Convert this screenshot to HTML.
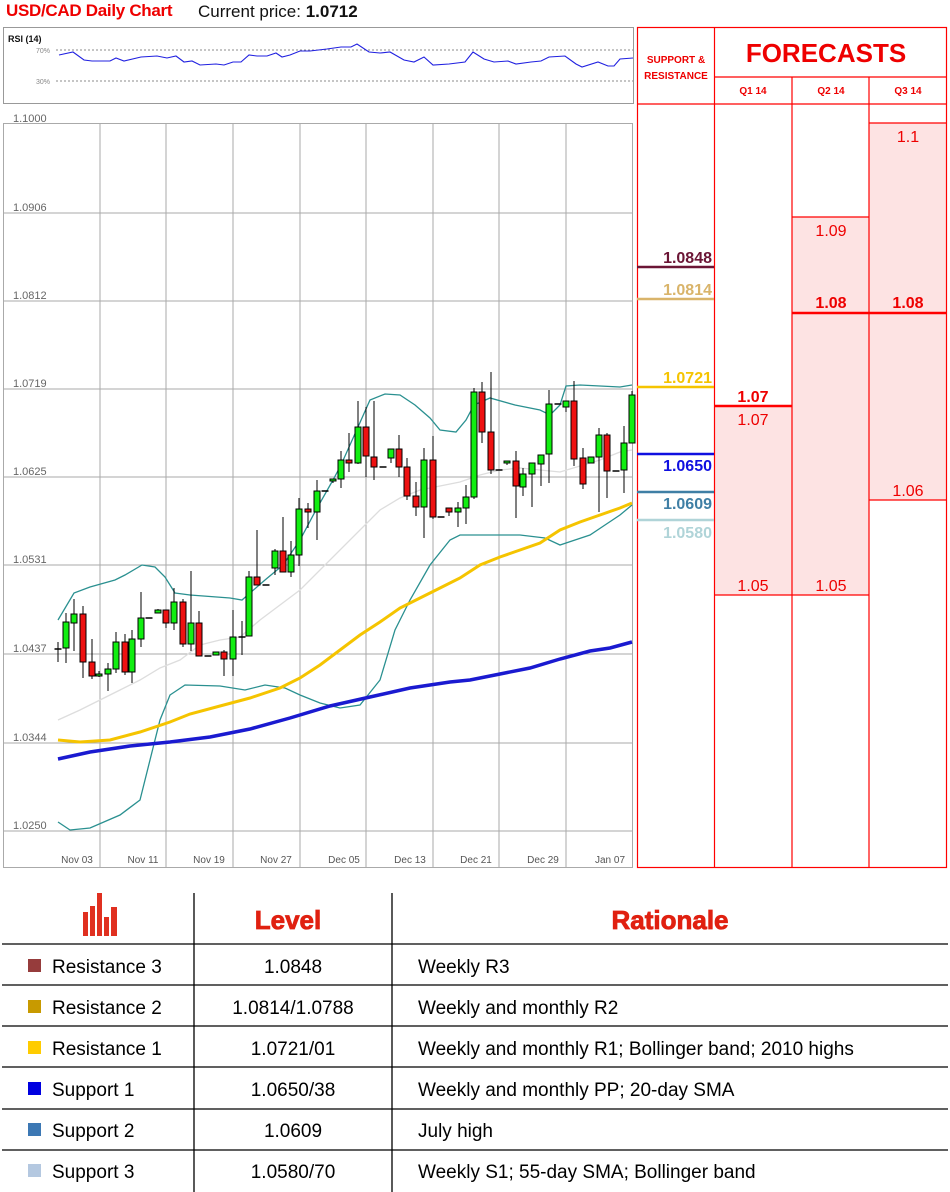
<!DOCTYPE html>
<html><head><meta charset="utf-8"><style>
body{margin:0;width:950px;height:1192px;background:#fff;overflow:hidden;position:relative;font-family:"Liberation Sans",sans-serif}
.a{position:absolute}
.t td{border-bottom:1px solid #000;height:40px;font-size:19px;color:#000}
</style></head><body>
<div class="a" style="left:6px;top:1px;font-size:17px;font-weight:bold;color:#e00;letter-spacing:-0.3px">USD/CAD Daily Chart</div>
<div class="a" style="left:198px;top:2px;font-size:17px;color:#111">Current price: <b>1.0712</b></div>

<svg class="a" style="left:0;top:0" width="950" height="880">
<!-- RSI panel -->
<rect x="3.5" y="27.5" width="630" height="76" fill="#fff" stroke="#999"/>
<text x="8" y="42" font-size="9" font-weight="bold" fill="#111">RSI (14)</text>
<text x="36" y="53" font-size="7" fill="#888">70%</text>
<text x="36" y="84" font-size="7" fill="#888">30%</text>
<line x1="56" y1="50" x2="633" y2="50" stroke="#666" stroke-dasharray="2,2" stroke-width="0.8"/>
<line x1="56" y1="81" x2="633" y2="81" stroke="#666" stroke-dasharray="2,2" stroke-width="0.8"/>
<polyline fill="none" stroke="#2020e0" stroke-width="1.1" points="59,55 73,52 84,60 92,61 110,61 116,58 124,61 141,57 157,56 167,58 176,56 184,62 192,61 200,65 216,64 224,65 233,62 241,62 249,55 257,56 267,56 276,53 282,57 290,55 300,51 310,51 327,49 341,47 351,47 357,44 369,52 380,53 390,52 404,60 414,62 424,57 433,65 449,64 465,62 473,52 484,59 494,62 508,61 516,64 531,62 541,61 549,57 565,56 576,64 582,67 598,62 608,66 614,66 620,59 633,58"/>
<!-- main chart -->
<rect x="3.5" y="123.5" width="629" height="744" fill="#fff" stroke="#aaa"/>
<g stroke="#aaa" stroke-width="1">
<line x1="4" y1="213" x2="633" y2="213"/><line x1="4" y1="301" x2="633" y2="301"/><line x1="4" y1="389" x2="633" y2="389"/><line x1="4" y1="477" x2="633" y2="477"/><line x1="4" y1="565" x2="633" y2="565"/><line x1="4" y1="654" x2="633" y2="654"/><line x1="4" y1="743" x2="633" y2="743"/><line x1="4" y1="831" x2="633" y2="831"/>
<line x1="100" y1="124" x2="100" y2="868"/><line x1="166" y1="124" x2="166" y2="868"/><line x1="233" y1="124" x2="233" y2="868"/><line x1="300" y1="124" x2="300" y2="868"/><line x1="366" y1="124" x2="366" y2="868"/><line x1="433" y1="124" x2="433" y2="868"/><line x1="499" y1="124" x2="499" y2="868"/><line x1="566" y1="124" x2="566" y2="868"/>
</g>
<g font-size="11" fill="#666">
<text x="13" y="122">1.1000</text><text x="13" y="211">1.0906</text><text x="13" y="299">1.0812</text><text x="13" y="387">1.0719</text><text x="13" y="475">1.0625</text><text x="13" y="563">1.0531</text><text x="13" y="652">1.0437</text><text x="13" y="741">1.0344</text><text x="13" y="829">1.0250</text>
</g>
<g font-size="10" fill="#555" text-anchor="middle">
<text x="77" y="863">Nov 03</text><text x="143" y="863">Nov 11</text><text x="209" y="863">Nov 19</text><text x="276" y="863">Nov 27</text><text x="344" y="863">Dec 05</text><text x="410" y="863">Dec 13</text><text x="476" y="863">Dec 21</text><text x="543" y="863">Dec 29</text><text x="610" y="863">Jan 07</text>
</g>
<polyline fill="none" stroke="#ddd" stroke-width="1.3" points="58,720 80,710 100,700 120,690 140,680 160,668 180,660 200,645 220,640 240,637 260,620 280,605 300,590 320,570 340,550 360,530 380,510 400,498 420,490 440,486 460,482 480,475 500,470 520,468 540,470 560,472 580,466 600,460 620,452 632,450"/>
<polyline fill="none" stroke="#2a9090" stroke-width="1.3" points="58,620 74,593 90,587 115,580 125,575 142,565 155,567 165,577 175,593 190,595 230,598 242,600 265,580 283,565 300,540 316,510 333,480 341,465 358,427 370,400 385,394 400,395 415,405 430,418 440,430 456,432 466,420 474,405 490,398 515,405 540,410 550,415 560,405 566,386 580,385 600,386 620,387 632,385"/>
<polyline fill="none" stroke="#2a9090" stroke-width="1.3" points="58,822 70,830 90,828 120,815 140,800 150,760 160,720 170,695 185,685 220,686 245,690 265,685 285,688 300,695 320,703 340,708 360,705 380,680 395,630 410,600 430,565 450,540 460,535 500,535 520,535 545,538 560,545 575,540 590,535 605,525 620,515 632,505"/>
<polyline fill="none" stroke="#f5c400" stroke-width="3" points="58,740 80,742 110,740 140,732 170,722 190,714 220,706 250,698 280,688 300,678 320,665 340,650 360,635 380,622 400,608 420,598 440,588 460,578 480,565 500,557 520,550 540,543 560,530 580,522 600,515 620,508 632,503"/>
<polyline fill="none" stroke="#1a1ad0" stroke-width="3.5" points="58,759 90,752 130,746 170,742 210,737 250,729 290,718 330,706 370,697 410,688 450,682 470,680 500,674 530,668 560,659 590,651 610,648 632,642"/>
<g id="c" stroke="#000" stroke-width="1"></g>
<!-- right panel -->
<rect x="714" y="406" width="78" height="189" fill="#fde3e3"/>
<rect x="792" y="217" width="77" height="378" fill="#fde3e3"/>
<rect x="869" y="123" width="78" height="377" fill="#fde3e3"/>
<g stroke="#f00" stroke-width="1.2" fill="none">
<rect x="637.5" y="27.5" width="309" height="840"/>
<line x1="714.5" y1="28" x2="714.5" y2="868"/>
<line x1="792" y1="77" x2="792" y2="868"/>
<line x1="869" y1="77" x2="869" y2="868"/>
<line x1="714" y1="77" x2="947" y2="77"/>
<line x1="637" y1="104" x2="947" y2="104"/>
<line x1="869" y1="123" x2="947" y2="123"/>
<line x1="792" y1="217" x2="869" y2="217"/>
<line x1="714" y1="595" x2="869" y2="595"/>
<line x1="869" y1="500" x2="947" y2="500"/>
<line x1="792" y1="313" x2="947" y2="313" stroke-width="2.5"/>
<line x1="714" y1="406" x2="792" y2="406" stroke-width="2.5"/>
</g>
<g font-weight="bold" fill="#e00" text-anchor="middle">
<text x="676" y="63" font-size="10">SUPPORT &amp;</text>
<text x="676" y="79" font-size="10">RESISTANCE</text>
<text x="826" y="62" font-size="26">FORECASTS</text>
<text x="753" y="94" font-size="10">Q1 14</text><text x="831" y="94" font-size="10">Q2 14</text><text x="908" y="94" font-size="10">Q3 14</text>
<text x="831" y="308" font-size="16">1.08</text><text x="908" y="308" font-size="16">1.08</text>
<text x="753" y="402" font-size="16">1.07</text>
</g>
<g fill="#e00" text-anchor="middle" font-size="16">
<text x="908" y="142">1.1</text><text x="831" y="236">1.09</text><text x="753" y="425">1.07</text><text x="908" y="496">1.06</text><text x="753" y="591">1.05</text><text x="831" y="591">1.05</text>
</g>
<line x1="637" y1="267" x2="714" y2="267" stroke="#6b1535" stroke-width="2.5"/>
<line x1="637" y1="299" x2="714" y2="299" stroke="#d9b46a" stroke-width="2.5"/>
<line x1="637" y1="387" x2="714" y2="387" stroke="#f5c400" stroke-width="2.5"/>
<line x1="637" y1="454" x2="714" y2="454" stroke="#1010e0" stroke-width="2.5"/>
<line x1="637" y1="492" x2="714" y2="492" stroke="#3f7fa5" stroke-width="2.5"/>
<line x1="637" y1="520" x2="714" y2="520" stroke="#b0d4d8" stroke-width="2.5"/>
<g font-size="16" font-weight="bold" text-anchor="end">
<text x="712" y="263" fill="#6b1535">1.0848</text>
<text x="712" y="295" fill="#d9b46a">1.0814</text>
<text x="712" y="383" fill="#f5c400">1.0721</text>
<text x="712" y="471" fill="#1010e0">1.0650</text>
<text x="712" y="509" fill="#3f7fa5">1.0609</text>
<text x="712" y="538" fill="#b0d4d8">1.0580</text>
</g>
</svg>

<!-- bottom table -->
<svg class="a" style="left:0;top:880px" width="950" height="312">
<g fill="#e03020">
<rect x="83" y="32" width="5" height="24"/><rect x="90" y="26" width="5" height="30"/><rect x="97" y="13" width="5" height="43"/><rect x="104" y="37" width="5" height="19"/><rect x="111" y="27" width="6" height="29"/>
</g>
<g font-family="Liberation Sans" font-weight="900" fill="#e02010" font-size="26" text-anchor="middle">
<text x="288" y="49" stroke="#e02010" stroke-width="0.8">Level</text>
<text x="670" y="49" stroke="#e02010" stroke-width="0.8">Rationale</text>
</g>
<g stroke="#000" stroke-width="1.3">
<line x1="194" y1="13" x2="194" y2="312"/><line x1="392" y1="13" x2="392" y2="312"/>
<line x1="2" y1="64" x2="948" y2="64"/><line x1="2" y1="105" x2="948" y2="105"/><line x1="2" y1="146" x2="948" y2="146"/><line x1="2" y1="187" x2="948" y2="187"/><line x1="2" y1="229" x2="948" y2="229"/><line x1="2" y1="270" x2="948" y2="270"/>
</g>
<g>
<rect x="28" y="79" width="13" height="13" fill="#963c3c"/>
<rect x="28" y="120" width="13" height="13" fill="#c89a00"/>
<rect x="28" y="161" width="13" height="13" fill="#ffcc00"/>
<rect x="28" y="202" width="13" height="13" fill="#0000e0"/>
<rect x="28" y="243" width="13" height="13" fill="#3c78b4"/>
<rect x="28" y="284" width="13" height="13" fill="#b4c8e0"/>
</g>
<g font-size="19" fill="#000">
<text x="52" y="93">Resistance 3</text><text x="52" y="134">Resistance 2</text><text x="52" y="175">Resistance 1</text><text x="52" y="216">Support 1</text><text x="52" y="257">Support 2</text><text x="52" y="298">Support 3</text>
<g text-anchor="middle"><text x="293" y="93">1.0848</text><text x="293" y="134">1.0814/1.0788</text><text x="293" y="175">1.0721/01</text><text x="293" y="216">1.0650/38</text><text x="293" y="257">1.0609</text><text x="293" y="298">1.0580/70</text></g>
<text x="418" y="93">Weekly R3</text><text x="418" y="134">Weekly and monthly R2</text><text x="418" y="175">Weekly and monthly R1; Bollinger band; 2010 highs</text><text x="418" y="216">Weekly and monthly PP; 20-day SMA</text><text x="418" y="257">July high</text><text x="418" y="298">Weekly S1; 55-day SMA; Bollinger band</text>
</g>
</svg>
<script>
var d=[[58,649,649,642,662,1],[66,622,648,613,663,1],[74,614,623,599,651,1],[83,614,662,606,678,0],[92,662,676,639,679,0],[99,674,676,671,677,1],[108,669,674,663,691,1],[116,642,669,632,673,1],[125,642,672,634,675,0],[132,639,672,630,683,1],[141,618,639,592,647,1],[149,618,618,618,618,1],[158,610,613,609,613,1],[166,610,623,610,628,0],[174,602,623,588,630,1],[183,602,644,599,647,0],[191,623,644,571,651,1],[199,623,656,611,656,0],[208,656,656,656,656,1],[216,652,655,652,655,1],[224,652,659,650,676,0],[233,637,659,610,676,1],[242,637,637,621,655,1],[249,577,636,571,636,1],[257,577,585,530,585,0],[266,585,585,585,585,1],[275,551,568,549,575,1],[283,551,572,517,572,0],[291,555,572,541,577,1],[299,509,555,498,566,1],[308,509,512,503,528,0],[317,491,512,480,540,1],[325,491,491,491,491,1],
[333,479,481,479,483,1],[341,460,479,451,488,1],[349,460,463,433,472,0],[358,427,463,401,464,1],[366,427,456,407,477,0],[374,457,467,401,480,0],[383,467,467,467,467,1],[391,449,458,449,463,1],[399,449,467,435,477,0],[407,467,496,458,500,0],[416,496,507,482,516,0],[424,460,507,448,538,1],[433,460,517,436,519,0],[441,517,517,517,517,1],[449,508,512,508,516,0],[458,508,512,502,527,1],[466,497,508,485,524,1],[474,392,497,388,499,1],[482,392,432,382,443,0],[491,432,470,372,474,0],[499,470,470,470,470,1],[507,461,463,461,465,1],[516,461,486,451,518,0],[523,474,487,468,496,1],[532,463,474,463,507,1],[541,455,464,455,486,1],[549,404,454,390,483,1],[558,404,404,404,404,1],[566,401,407,401,412,1],[574,401,459,381,466,0],[583,458,484,448,489,0],[591,457,463,457,463,1],[599,435,457,428,512,1],[607,435,471,433,498,0],[616,471,471,471,471,1],[624,443,470,426,493,1],[632,395,443,391,443,1]];
var s='';d.forEach(function(c){s+='<line x1="'+c[0]+'" y1="'+c[3]+'" x2="'+c[0]+'" y2="'+c[4]+'"/>';var h=c[2]-c[1];if(h<2){s+='<line x1="'+(c[0]-3.5)+'" y1="'+c[1]+'" x2="'+(c[0]+3.5)+'" y2="'+c[1]+'" stroke-width="1.5"/>'}else{s+='<rect x="'+(c[0]-3)+'" y="'+c[1]+'" width="6" height="'+h+'" fill="'+(c[5]?'#11ee11':'#ee1111')+'"/>'}});
document.getElementById('c').innerHTML=s;
</script>
</body></html>
